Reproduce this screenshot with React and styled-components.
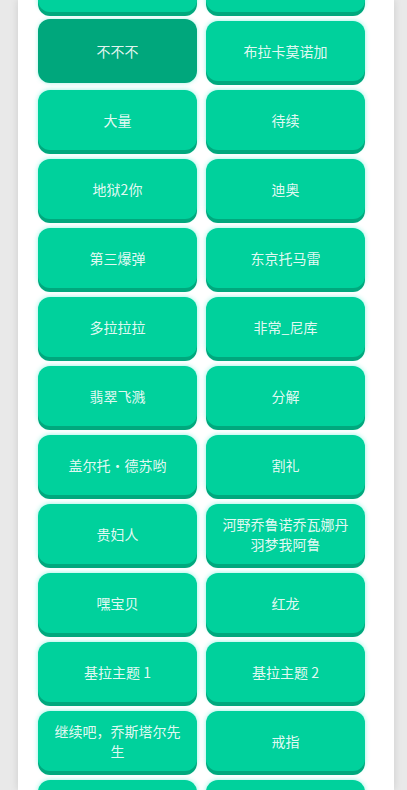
import React from "react";
import styled, { createGlobalStyle } from "styled-components";

const GlobalStyle = createGlobalStyle`
  html, body {
    margin: 0;
    padding: 0;
    background: #e9e9e9;
    height: 100%;
    overflow: hidden;
  }
  body {
    font-family: "Noto Sans CJK SC", "Noto Sans", sans-serif;
  }
`;

const Page = styled.div`
  height: 100vh;
  overflow: hidden;
  display: flex;
`;

const Panel = styled.div`
  margin-left: 18px;
  width: 376px;
  background: #ffffff;
  box-shadow: 0 0 8px rgba(0, 0, 0, 0.12);
  padding-left: 20px;
  box-sizing: border-box;
`;

const Grid = styled.div`
  margin-top: -48px;
  display: grid;
  grid-template-columns: 159px 159px;
  grid-auto-rows: 60px;
  column-gap: 9px;
  row-gap: 9px;
`;

const SoundButton = styled.button`
  box-sizing: border-box;
  height: ${props => (props.$pressed ? "64px" : "60px")};
  transform: ${props => (props.$pressed ? "translateY(-2px)" : "none")};
  border: none;
  border-radius: 12px;
  padding: 0 12px;
  background: ${props => (props.$pressed ? "#00a77c" : "#00d19c")};
  box-shadow: ${props =>
    props.$pressed
      ? "0 0 4px rgba(0, 220, 180, 0.35)"
      : "0 4px 0 #00a87d, 0 0 5px rgba(0, 230, 190, 0.45)"};
  color: rgba(255, 255, 255, 0.9);
  font-family: "Noto Sans CJK SC", "Noto Sans", sans-serif;
  font-size: 14px;
  line-height: 20px;
  text-align: center;
  cursor: pointer;
  display: flex;
  align-items: center;
  justify-content: center;
`;

// first and last rows sit outside the visible scroll area
const sounds = [
  "", "",
  "不不不", "布拉卡莫诺加",
  "大量", "待续",
  "地狱2你", "迪奥",
  "第三爆弹", "东京托马雷",
  "多拉拉拉", "非常_尼库",
  "翡翠飞溅", "分解",
  "盖尔托・德苏哟", "割礼",
  "贵妇人", "河野乔鲁诺乔瓦娜丹羽梦我阿鲁",
  "嘿宝贝", "红龙",
  "基拉主题 1", "基拉主题 2",
  "继续吧，乔斯塔尔先生", "戒指",
  "", "",
];

const App = () => {
  return (
    <Page>
      <GlobalStyle />
      <Panel>
        <Grid>
          {sounds.map((name, i) => (
            <SoundButton key={i} $pressed={name === "不不不"}>
              {name}
            </SoundButton>
          ))}
        </Grid>
      </Panel>
    </Page>
  );
};

export default App;
